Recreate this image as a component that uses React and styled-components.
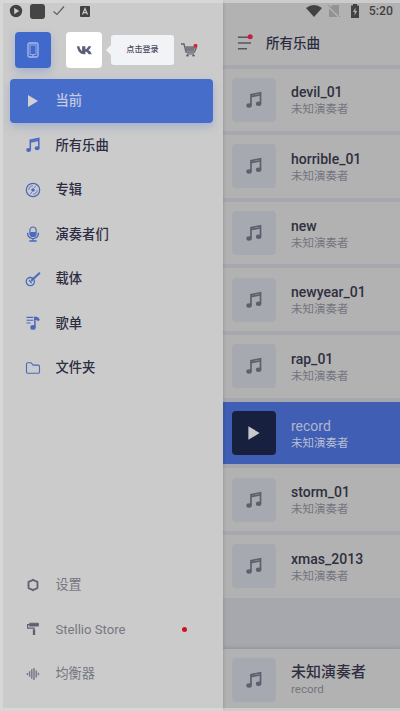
import React from "react";
import styled, { createGlobalStyle } from "styled-components";

const GlobalStyle = createGlobalStyle`
  * { box-sizing: border-box; }
  body { margin: 0; background: #b0b0b0; }
`;

const Screen = styled.div`
  position: relative;
  display: flex;
  width: 400px;
  height: 711px;
  overflow: hidden;
  background: #b2b2b2;
  font-family: Roboto, "Noto Sans CJK SC", sans-serif;
  color: #2b2b40;
`;

const Bezel = styled.div`
  position: absolute;
  z-index: 2;
  inset: 0;
  border: solid rgba(226, 226, 226, 0.55);
  border-width: 3px 0 3px 3px;
  pointer-events: none;
`;

const Drawer = styled.aside`
  position: relative;
  z-index: 1;
  display: flex;
  flex-direction: column;
  flex: none;
  width: 223px;
  height: 711px;
  background: #cbcbcb;
  box-shadow: 1px 0 3px rgba(0, 0, 0, 0.12);
`;

const StatusIcons = styled.div`
  display: flex;
  align-items: center;
  height: 22px;
  padding-left: 9px;
  gap: 7px;
`;

const SourceBar = styled.div`
  display: flex;
  align-items: center;
  height: 36px;
  margin-top: 10px;
  padding-left: 15px;
`;

const SourceButton = styled.button`
  display: grid;
  place-items: center;
  width: 36px;
  height: 36px;
  padding: 0;
  border: 0;
  border-radius: 4px;
  margin-right: ${(p) => (p.$active ? 15 : 9)}px;
  background: ${(p) => (p.$active ? "#4169cb" : "#fff")};
  box-shadow: ${(p) => (p.$active ? "0 4px 8px rgba(65,105,203,.28)" : "none")};
`;

const LoginHint = styled.div`
  position: relative;
  width: 63px;
  height: 30px;
  border-radius: 3px;
  background: #f2f3f6;
  font-size: 8.1px;
  font-weight: 500;
  color: #4a4b5e;
  line-height: 29px;
  text-align: center;
  margin-right: 7px;
  &::before {
    content: "";
    position: absolute;
    left: -5px;
    top: 10px;
    border: solid transparent;
    border-width: 5px 5px 5px 0;
    border-right-color: #f2f3f6;
  }
`;

const Menu = styled.nav`
  display: flex;
  flex-direction: column;
  margin-top: ${(p) => (p.$footer ? "auto" : "10.5px")};
  margin-bottom: ${(p) => (p.$footer ? "15px" : "0")};
`;

const MenuItem = styled.a`
  display: flex;
  align-items: center;
  height: 44.5px;
  margin: 0 10px;
  padding-left: 15px;
  border-radius: 4px;
  font-size: ${(p) => (p.$muted ? 13.1 : 13.3)}px;
  font-weight: ${(p) => (p.$muted ? 400 : 500)};
  color: ${(p) => (p.$active ? "#c4cae0" : p.$muted ? "#777782" : "#2c2c43")};
  background: ${(p) => (p.$active ? "#476dcb" : "transparent")};
  box-shadow: ${(p) => (p.$active ? "0 4px 8px rgba(65,105,203,.26)" : "none")};
`;

const MenuLabel = styled.span`
  margin-left: 14.5px;
  padding-top: 1px;
  line-height: 20px;
  white-space: nowrap;
`;

const AlertDot = styled.i`
  width: 5px;
  height: 5px;
  border-radius: 50%;
  background: #cc1423;
  margin-left: auto;
  margin-right: 26px;
`;

const Library = styled.main`
  display: flex;
  flex-direction: column;
  width: 177px;
  height: 711px;
  background: #a7a8ad;
`;

const StatusBar = styled.div`
  display: flex;
  align-items: center;
  justify-content: flex-end;
  height: 22px;
  padding-right: 7px;
  gap: 6px;
  background: #b2b2b2;
`;

const Clock = styled.span`
  font-size: 12.3px;
  font-weight: 500;
  line-height: 22px;
  color: #424242;
`;

const TitleBar = styled.header`
  display: flex;
  align-items: center;
  height: 43px;
  padding: 0 0 3px 14px;
  gap: 12px;
  background: #b2b2b2;
  font-size: 13.5px;
  font-weight: 500;
`;

const TrackList = styled.div`
  display: flex;
  flex-direction: column;
  gap: 4px;
  padding-top: 3.5px;
`;

const Track = styled.div`
  display: flex;
  align-items: center;
  height: 62.65px;
  padding: 0 0 0 9px;
  background: ${(p) => (p.$playing ? "#405eb3" : "#b2b2b2")};
`;

const Cover = styled.div`
  display: grid;
  place-items: center;
  flex: none;
  width: 44px;
  height: 44px;
  border-radius: 4px;
  margin-right: 15px;
  background: ${(p) => (p.$playing ? "#17213f" : "#a7a9b0")};
`;

const TrackText = styled.div`
  display: flex;
  flex-direction: column;
  padding-top: 1px;
  white-space: nowrap;
`;

const TrackTitle = styled.span`
  font-size: ${(p) => (p.$large ? 15 : 14)}px;
  line-height: 18px;
  font-weight: ${(p) => (p.$playing ? 400 : 500)};
  color: ${(p) => (p.$playing ? "#afb6d0" : "#2f2f40")};
`;

const TrackArtist = styled.span`
  font-size: 11.5px;
  line-height: 16px;
  color: ${(p) => (p.$playing ? "#b6bdd2" : "#74757f")};
`;

const NowPlaying = styled.footer`
  display: flex;
  align-items: center;
  height: 62px;
  margin-top: auto;
  padding: 0 0 1px 9px;
  background: #b2b2b2;
  box-shadow: 0 -1px 4px rgba(70, 70, 90, 0.25);
`;

const Icon = ({ size = 16, color = "#4a69bf", children, label }) => (
  <svg width={size} height={size} viewBox="0 0 16 16" fill="none" stroke={color} strokeWidth="1.3" aria-label={label}>
    {children}
  </svg>
);

const Note = ({ color = "#4a69bf", size = 16 }) => (
  <Icon color={color} size={size}>
    <path d="M5.3 12.7V3.2l8.5-1.7v9.7M5.3 5l8.5-1.7" strokeWidth="1.5" />
    <ellipse cx="3.6" cy="12.9" rx="2.4" ry="2" fill={color} stroke="none" />
    <ellipse cx="12.1" cy="11.3" rx="2.4" ry="2" fill={color} stroke="none" />
  </Icon>
);

const Play = ({ color = "#d1d1d4", size = 16 }) => (
  <Icon size={size} color="none"><path d="M3 2v12l10-6z" fill={color} /></Icon>
);

const Disc = () => (
  <Icon><circle cx="8" cy="8" r="6.7" strokeWidth="1.2" /><circle cx="8" cy="8" r="1.7" fill="#4a69bf" stroke="none" /><path d="M8 3.8A4.2 4.2 0 0 0 3.8 8M12.2 8A4.2 4.2 0 0 1 8 12.2M9.2 6 11 3.6M6.8 10 5 12.4" strokeWidth=".8" /></Icon>
);

const Mic = () => (
  <Icon><rect x="4.9" y="1" width="6.2" height="9.5" rx="3.1" strokeWidth="1.2" /><path d="M5.2 6h5.6v1.8a2.8 2.8 0 0 1-5.6 0z" fill="#4a69bf" stroke="none" /><path d="M2.7 6.7v1.4a5.3 4.5 0 0 0 10.6 0V6.7M8 12.5v2.2M4.3 15h7.4" strokeWidth="1.4" /></Icon>
);

const Guitar = () => (
  <Icon><circle cx="5.3" cy="10.6" r="4.1" /><path d="m4 9.2 2.8 2.8" /><path d="m6.2 9.7 8.7-8" strokeWidth="2" /></Icon>
);

const Playlist = () => (
  <Icon><path d="M1.5 2.4h6.8M1.5 5.2h6.8M1.5 8h4" strokeWidth="1.1" /><path d="M9.9 12.3V2" strokeWidth="1.5" /><path d="M9.3 1.4c2 .1 4.9.5 5.4 3.4l-1.2 1.5c-.8-1.1-2.2-1.3-4.2-1.4z" fill="#4a69bf" stroke="none" /><ellipse cx="8" cy="12.4" rx="2.7" ry="2.4" fill="#4a69bf" stroke="none" /></Icon>
);

const Folder = () => (
  <Icon><path d="M1.5 4.1c0-.9.5-1.4 1.4-1.4h3.1l2.2 2.4h4.9c.9 0 1.4.5 1.4 1.4v5.4c0 .9-.5 1.4-1.4 1.4H2.9c-.9 0-1.4-.5-1.4-1.4z" strokeWidth="1.1" /></Icon>
);

const Gear = () => (
  <Icon color="#62636d"><path d="m8 2.7 1.5 1 2.9 1.1.1 3.2-.1 3.2-2.9 1.1-1.5 1-1.5-1-2.9-1.1L3.5 8l.1-3.2 2.9-1.1z" strokeWidth="1.9" strokeLinejoin="round" /></Icon>
);

const Roller = () => (
  <Icon color="#5e6070"><path d="M4.5 2.2h9v2.9h-9z" fill="#5e6070" strokeWidth=".7" /><path d="M4.5 3.7H2.6v3.5H9V9" strokeWidth="1.2" /><path d="M9 8.5V14" strokeWidth="2.3" /></Icon>
);

const Equalizer = () => (
  <Icon color="#777887"><path d="M2.4 7v2M4.6 5.2v5.6M6.8 3.2v9.6M9 2v12M11.2 4.6v6.8M13.4 6.7v2.6" strokeWidth="1.45" /></Icon>
);

const primary = [
  ["当前", Play],
  ["所有乐曲", Note],
  ["专辑", Disc],
  ["演奏者们", Mic],
  ["载体", Guitar],
  ["歌单", Playlist],
  ["文件夹", Folder],
];

const secondary = [
  ["设置", Gear],
  ["Stellio Store", Roller],
  ["均衡器", Equalizer],
];

const tracks = ["devil_01", "horrible_01", "new", "newyear_01", "rap_01", "record", "storm_01", "xmas_2013"];

export default function App() {
  return (
    <>
      <GlobalStyle />
      <Screen>
        <Drawer>
          <StatusIcons>
            <svg width="14" height="14" viewBox="0 0 14 14"><circle cx="7" cy="7" r="6.2" fill="#424242" /><path d="M5.2 3.8v6.4l5-3.2z" fill="#cbcbcb" /></svg>
            <svg width="15" height="15" viewBox="0 0 15 15"><rect width="15" height="15" rx="3" fill="#454545" /></svg>
            <svg width="14" height="12" viewBox="0 0 14 12"><path d="m1.5 6.5 3.5 3 7-8" fill="none" stroke="#606060" strokeWidth="1.2" /></svg>
            <svg width="20" height="11" viewBox="-7 0 20 11"><rect width="10" height="11" rx="1" fill="#424242" /><path d="m2.5 8.5 2.5-6 2.5 6M3.4 6.6h3.2" fill="none" stroke="#cbcbcb" strokeWidth="1.2" /></svg>
          </StatusIcons>
          <SourceBar>
            <SourceButton $active aria-label="phone">
              <svg width="12" height="16" viewBox="0 0 12 16" fill="none" stroke="#a9bae8"><rect x="1" y="1" width="10" height="14" rx="1.5" strokeWidth="1.3" /><path d="M3 2.5v10h6v-10M3 3h6M5 13.7h2" strokeWidth=".8" /></svg>
            </SourceButton>
            <SourceButton aria-label="vk">
              <svg width="17" height="11" viewBox="0 0 17 11"><path d="M1 1.2h2.3c.6 2.4 1.5 4 2.8 4.8V1.2h3.3v3.2c1.2-.5 2.3-1.7 3-3.2h2.8c-.6 1.6-1.6 3-2.9 3.9 1.5.7 2.7 2 3.4 4.1h-3c-.7-1.4-1.8-2.3-3.3-2.7v2.7H8.2C4.2 9.2 1.5 6.1 1 1.2z" fill="#5b6078" /></svg>
            </SourceButton>
            <LoginHint>点击登录</LoginHint>
            <svg width="18" height="16" viewBox="0 0 18 16"><path d="M0 2h3l2 8.2h8.5L15.5 5" fill="none" stroke="#60616b" strokeWidth="1.3" /><path d="M4 4.3h10.5l-1.6 4.9H5.2z" fill="#777882" /><path d="M6 12h7" stroke="#60616b" /><circle cx="6.5" cy="13.4" r="1.2" fill="#60616b" /><circle cx="12.5" cy="13.4" r="1.2" fill="#60616b" /><circle cx="14.5" cy="3.7" r="2" fill="#d32645" /></svg>
          </SourceBar>
          <Menu>
            {primary.map(([label, Glyph], index) => (
              <MenuItem key={label} $active={index === 0}><Glyph /><MenuLabel>{label}</MenuLabel></MenuItem>
            ))}
          </Menu>
          <Menu $footer>
            {secondary.map(([label, Glyph], index) => (
              <MenuItem key={label} $muted><Glyph /><MenuLabel>{label}</MenuLabel>{index === 1 && <AlertDot />}</MenuItem>
            ))}
          </Menu>
        </Drawer>
        <Library>
          <StatusBar>
            <svg width="16" height="12" viewBox="0 0 16 12"><path d="M0 3Q8-3 16 3L8 12z" fill="#424242" /></svg>
            <svg width="12" height="12" viewBox="0 0 12 12"><path d="M2.5 2 4.5 0H11v10zM1 3.5V12h8.5z" fill="#929292" /><path d="m0 0 12 12" stroke="#929292" /></svg>
            <svg width="17" height="14" viewBox="-4 0 17 14"><path d="M3 0h4v1.5h2V14H1V1.5h2z" fill="#424242" /><path d="M5.5 3.5 3 8h1.8l-.3 3.5L7.2 7H5.4z" fill="#b2b2b2" /></svg>
            <Clock>5:20</Clock>
          </StatusBar>
          <TitleBar>
            <svg width="17" height="17" viewBox="0 0 17 17"><path d="M1 3.3h12M1 9h13M1 14.7h9" stroke="#55565f" strokeWidth="1.4" /><circle cx="13.2" cy="2.8" r="2.5" fill="#c51f40" /></svg>
            所有乐曲
          </TitleBar>
          <TrackList>
            {tracks.map((title) => {
              const playing = title === "record";
              return (
                <Track key={title} $playing={playing}>
                  <Cover $playing={playing}>{playing ? <Play size={18} color="#c9c9c9" /> : <Note size={18} color="#5e5f6c" />}</Cover>
                  <TrackText>
                    <TrackTitle $playing={playing}>{title}</TrackTitle>
                    <TrackArtist $playing={playing}>未知演奏者</TrackArtist>
                  </TrackText>
                </Track>
              );
            })}
          </TrackList>
          <NowPlaying>
            <Cover><Note size={18} color="#5e5f6c" /></Cover>
            <TrackText>
              <TrackTitle $large>未知演奏者</TrackTitle>
              <TrackArtist>record</TrackArtist>
            </TrackText>
          </NowPlaying>
        </Library>
        <Bezel />
      </Screen>
    </>
  );
}
